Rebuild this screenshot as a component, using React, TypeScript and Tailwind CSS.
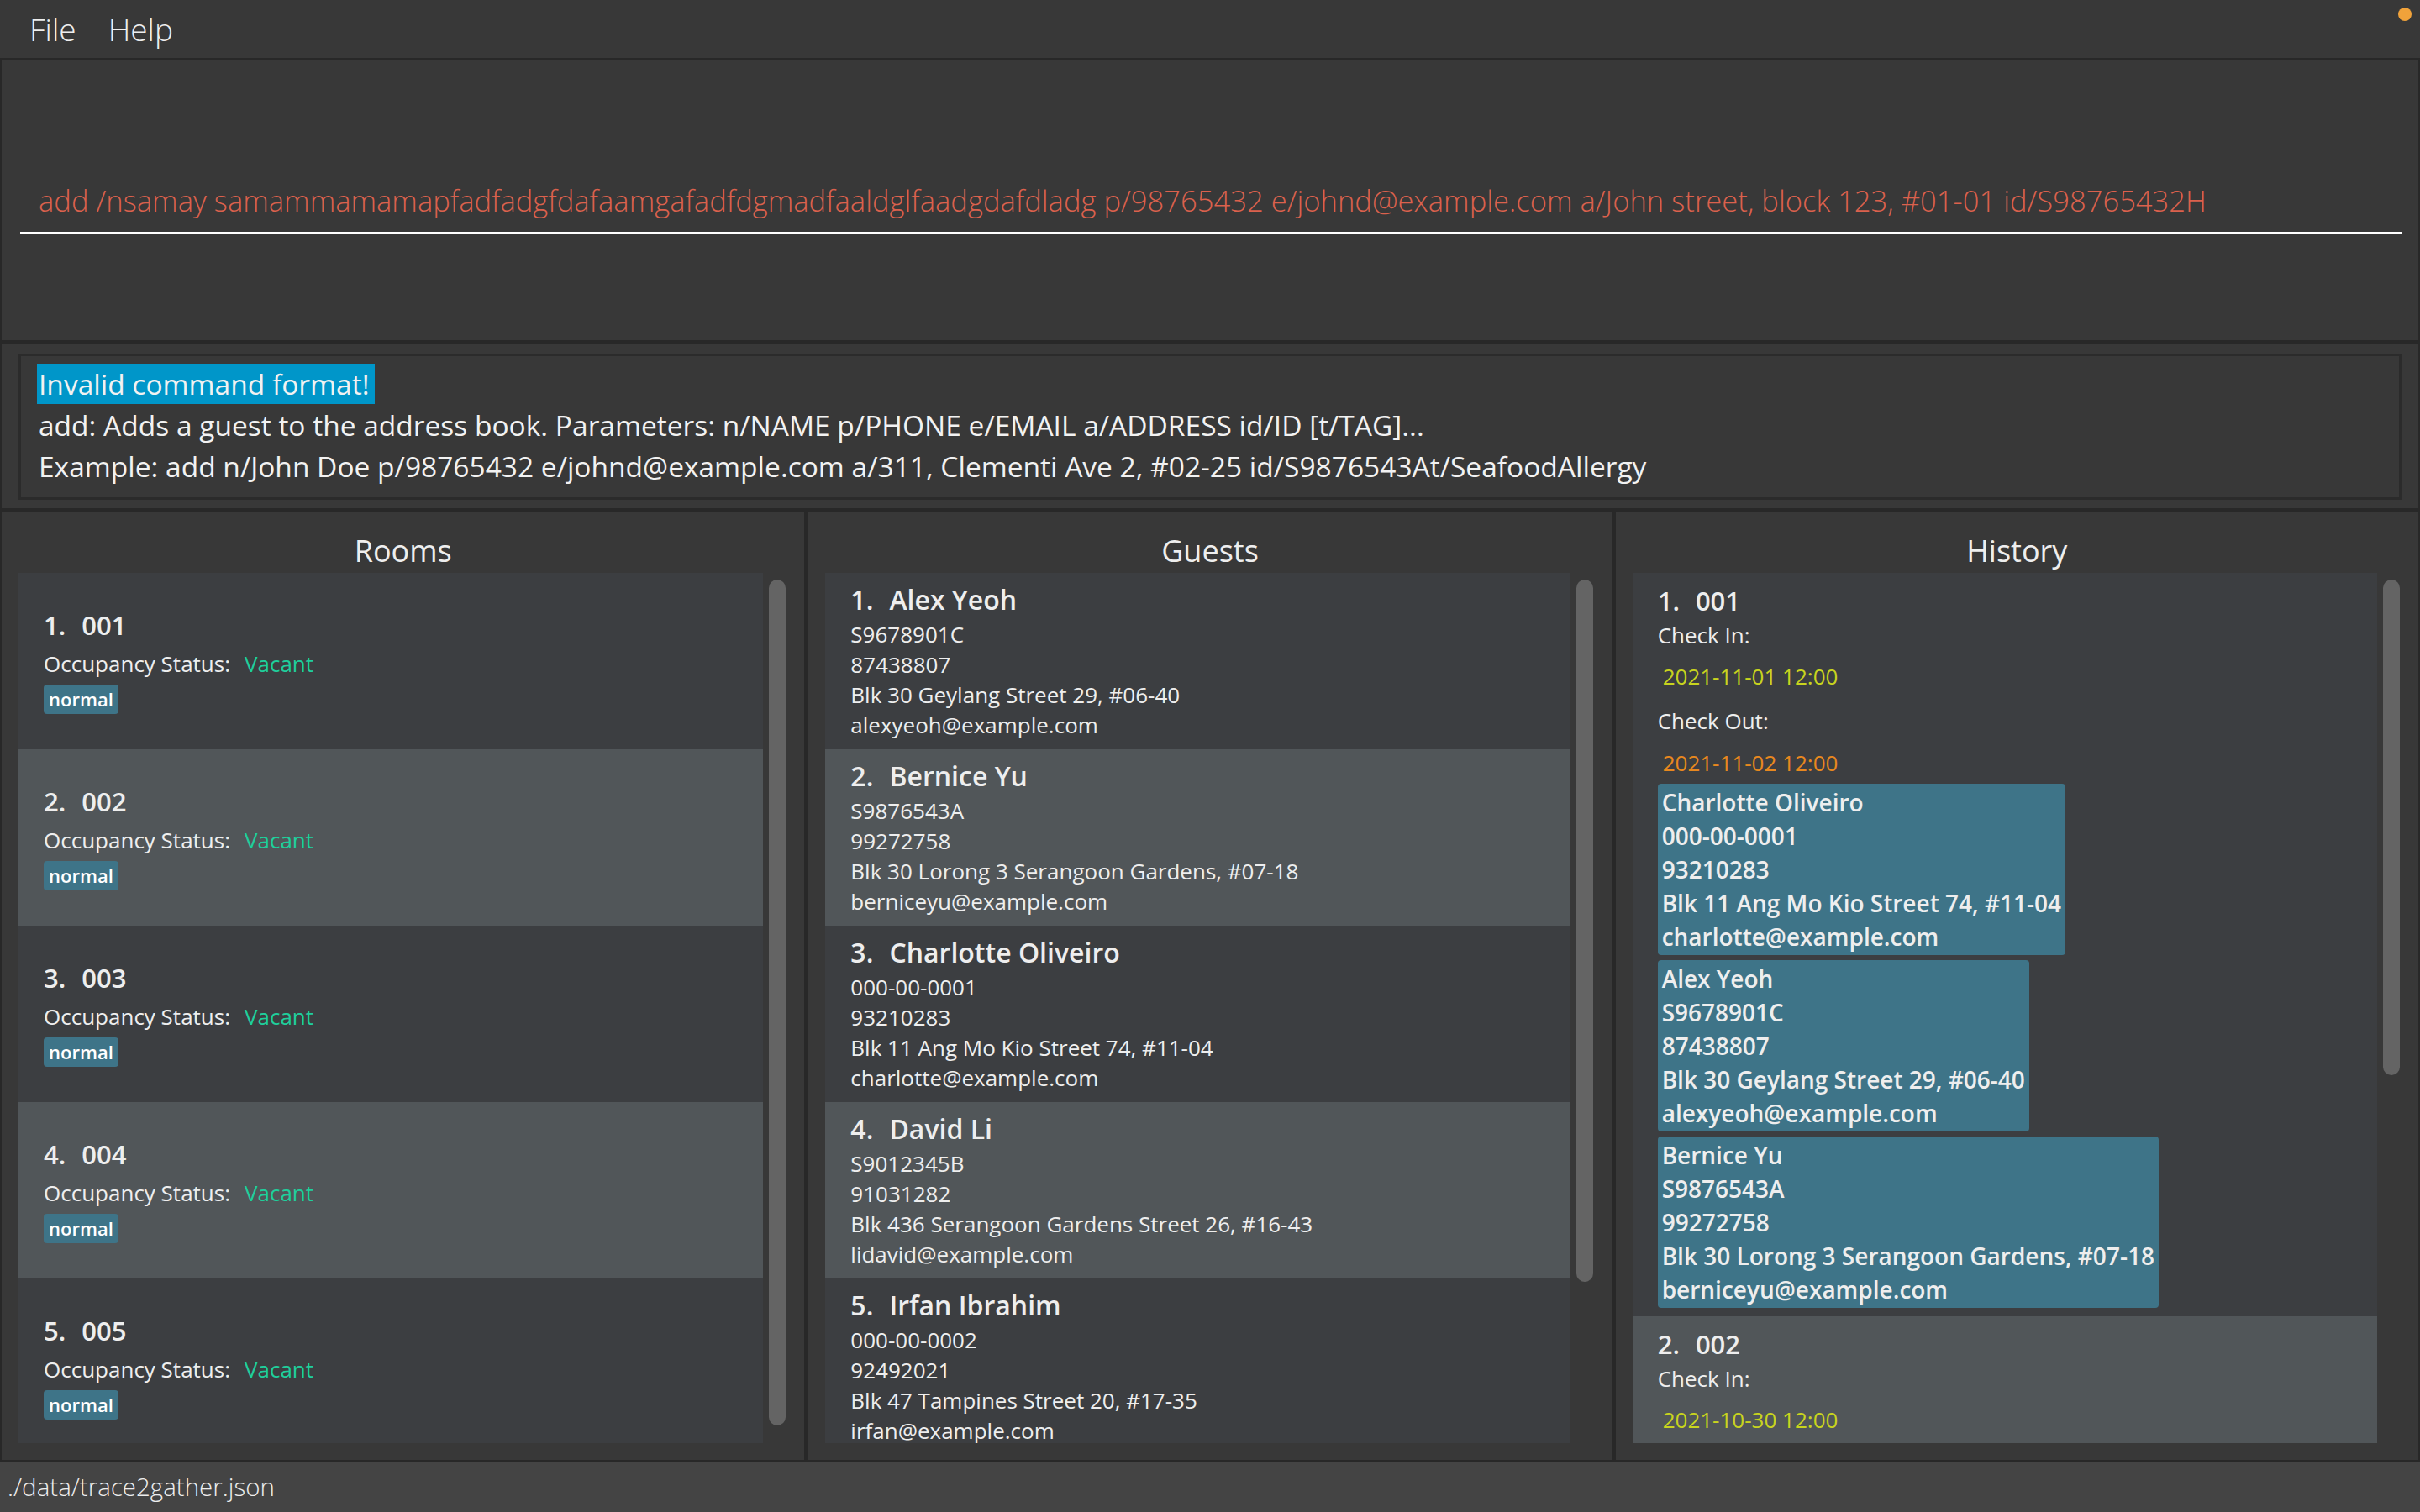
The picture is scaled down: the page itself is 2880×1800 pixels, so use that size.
import type { ReactNode } from 'react';

type Room = { id: string };
type Guest = { name: string; idNo: string; phone: string; address: string; email: string };

const rooms: Room[] = [{ id: '001' }, { id: '002' }, { id: '003' }, { id: '004' }, { id: '005' }];

const guests: Guest[] = [
  { name: 'Alex Yeoh', idNo: 'S9678901C', phone: '87438807', address: 'Blk 30 Geylang Street 29, #06-40', email: 'alexyeoh@example.com' },
  { name: 'Bernice Yu', idNo: 'S9876543A', phone: '99272758', address: 'Blk 30 Lorong 3 Serangoon Gardens, #07-18', email: 'berniceyu@example.com' },
  { name: 'Charlotte Oliveiro', idNo: '000-00-0001', phone: '93210283', address: 'Blk 11 Ang Mo Kio Street 74, #11-04', email: 'charlotte@example.com' },
  { name: 'David Li', idNo: 'S9012345B', phone: '91031282', address: 'Blk 436 Serangoon Gardens Street 26, #16-43', email: 'lidavid@example.com' },
  { name: 'Irfan Ibrahim', idNo: '000-00-0002', phone: '92492021', address: 'Blk 47 Tampines Street 20, #17-35', email: 'irfan@example.com' },
];

// history entries point back into the guest list
const history = [
  { room: '001', checkIn: '2021-11-01 12:00', checkOut: '2021-11-02 12:00', guests: [guests[2], guests[0], guests[1]] },
  { room: '002', checkIn: '2021-10-30 12:00', checkOut: '2021-10-31 12:00', guests: [guests[3]] },
];

const rowBg = (i: number) => (i % 2 === 0 ? 'bg-[#3c3e41]' : 'bg-[#515659]');

function Column({ title, thumb, children }: { title: string; thumb: string; children: ReactNode }) {
  return (
    <section className="flex min-w-0 flex-1 flex-col bg-[#383838]">
      <h2 className="h-[72px] pt-[22px] text-center text-[36px] leading-[48px] text-[#eeeeee]">{title}</h2>
      <div className="flex h-[1036px] gap-[7px] pl-[20px] pr-[22px]">
        <div className="min-w-0 flex-1 overflow-hidden">{children}</div>
        <div className="w-[20px] shrink-0 pt-[8px]">
          <div className={`${thumb} rounded-[10px] bg-[#646464]`} />
        </div>
      </div>
    </section>
  );
}

function Heading({ index, text, size }: { index: number; text: string; size: string }) {
  return (
    <p className={`flex gap-[19px] font-semibold leading-[40px] text-[#eeeeee] ${size}`}>
      <span>{index}.</span>
      <span>{text}</span>
    </p>
  );
}

function RoomCard({ room, i }: { room: Room; i: number }) {
  return (
    <div className={`flex h-[210px] shrink-0 flex-col justify-center pl-[30px] ${rowBg(i)}`}>
      <Heading index={i + 1} text={room.id} size="text-[31px]" />
      <p className="mt-[8px] text-[26px] leading-[36px] text-[#eeeeee]">
        Occupancy Status:<span className="ml-[17px] text-[#1fcf9c]">Vacant</span>
      </p>
      <span className="mt-[7px] flex h-[35px] w-fit items-center rounded-[4px] bg-[#3e7488] px-[6px] text-[22px] font-semibold text-white">
        normal
      </span>
    </div>
  );
}

function GuestCard({ guest, i }: { guest: Guest; i: number }) {
  return (
    <div className={`flex h-[210px] shrink-0 flex-col justify-center pl-[30px] ${rowBg(i)}`}>
      <Heading index={i + 1} text={guest.name} size="text-[32px]" />
      <div className="mt-[3px] text-[26px] leading-[36px] text-[#eeeeee]">
        <p>{guest.idNo}</p>
        <p>{guest.phone}</p>
        <p>{guest.address}</p>
        <p>{guest.email}</p>
      </div>
    </div>
  );
}

function HistoryCard({ entry, i }: { entry: (typeof history)[number]; i: number }) {
  return (
    <div className={`shrink-0 pb-[10px] pl-[30px] pt-[13px] ${rowBg(i)}`}>
      <Heading index={i + 1} text={entry.room} size="text-[31px]" />
      <p className="mt-[3px] text-[26px] leading-[36px] text-[#eeeeee]">Check In:</p>
      <p className="ml-[6px] mt-[13px] text-[26px] leading-[36px] text-[#c8d41e]">{entry.checkIn}</p>
      <p className="mt-[17px] text-[26px] leading-[36px] text-[#eeeeee]">Check Out:</p>
      <p className="ml-[6px] mt-[14px] text-[26px] leading-[36px] text-[#e8881e]">{entry.checkOut}</p>
      <div className="mt-[7px] flex flex-col gap-[6px]">
        {entry.guests.map((g) => (
          <div
            key={g.idNo}
            className="w-fit rounded-[4px] bg-[#3e7488] px-[5px] py-[2px] text-[28px] font-semibold leading-[40px] text-[#eeeeee]"
          >
            <p>{g.name}</p>
            <p>{g.idNo}</p>
            <p>{g.phone}</p>
            <p>{g.address}</p>
            <p>{g.email}</p>
          </div>
        ))}
      </div>
    </div>
  );
}

export default function App() {
  return (
    <div className="flex h-[1800px] w-[2880px] flex-col overflow-hidden bg-[#282828] font-['Open_Sans',sans-serif]">
      {/* menu bar */}
      <header className="relative flex h-[69px] shrink-0 items-center gap-[38px] bg-[#383838] pl-[35px] text-[37px] font-light text-[#eeeeee]">
        <span>File</span>
        <span>Help</span>
        <span className="absolute right-[10px] top-[9px] h-[16px] w-[16px] rounded-full bg-[#f0a23a]" />
      </header>

      {/* command box */}
      <div className="mx-[2px] mt-[3px] h-[333px] shrink-0 bg-[#383838] pl-[22px] pr-[20px] pt-[143px]">
        <div className="border-b-2 border-white pb-[13px]">
          <p className="h-[48px] whitespace-nowrap pl-[22px] text-[34.6px] font-light leading-[48px] text-[#db614d]">
            add /nsamay samammamamapfadfadgfdafaamgafadfdgmadfaaldglfaadgdafdladg p/98765432 e/johnd@example.com a/John street, block 123, #01-01 id/S98765432H
          </p>
        </div>
      </div>

      {/* result display */}
      <div className="mx-[2px] mt-[4px] h-[196px] shrink-0 bg-[#383838] px-[20px] pb-[10px] pt-[12px]">
        <div className="h-full border-[3px] border-[#2b2b2b] pl-[21px] pt-[9px] text-[33.5px] leading-[49px] text-[#f2f2f2]">
          <p>
            <span className="-ml-[2px] inline-block bg-[#0096c9] pl-[2px] pr-[7px] leading-[48px]">Invalid command format!</span>
          </p>
          <p>add: Adds a guest to the address book. Parameters: n/NAME p/PHONE e/EMAIL a/ADDRESS id/ID [t/TAG]...</p>
          <p>Example: add n/John Doe p/98765432 e/johnd@example.com a/311, Clementi Ave 2, #02-25 id/S9876543At/SeafoodAllergy</p>
        </div>
      </div>

      {/* lists */}
      <div className="mt-[5px] flex h-[1128px] shrink-0 gap-[5px] px-[2px]">
        <Column title="Rooms" thumb="h-[1007px]">
          {rooms.map((r, i) => (
            <RoomCard key={r.id} room={r} i={i} />
          ))}
        </Column>
        <Column title="Guests" thumb="h-[836px]">
          {guests.map((g, i) => (
            <GuestCard key={g.idNo} guest={g} i={i} />
          ))}
        </Column>
        <Column title="History" thumb="h-[590px]">
          {history.map((h, i) => (
            <HistoryCard key={h.room} entry={h} i={i} />
          ))}
        </Column>
      </div>

      {/* status bar */}
      <footer className="mt-[2px] flex h-[60px] shrink-0 items-center bg-[#444444] pl-[9px] text-[29.5px] font-light text-[#eeeeee]">
        ./data/trace2gather.json
      </footer>
    </div>
  );
}
